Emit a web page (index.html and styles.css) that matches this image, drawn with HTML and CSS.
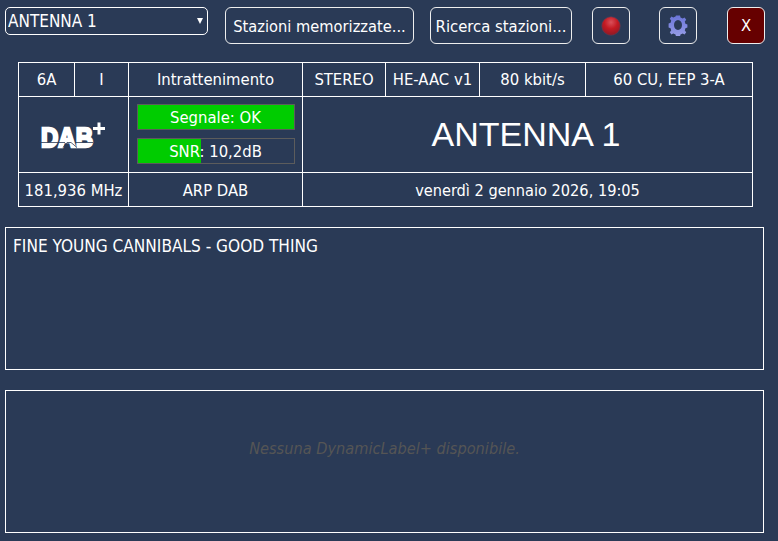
FILE: index.html
```html
<!DOCTYPE html>
<html>
  <head>
    <title>DAB+ Radio</title>
    <link rel="stylesheet" href="styles.css">
  </head>
  <body>
    <div class="toolbar">
      <div class="station-select">
        <select>
          <option>ANTENNA 1</option>
        </select>
      </div>
      <button class="btn btn-stored">Stazioni memorizzate...</button>
      <button class="btn btn-search">Ricerca stazioni...</button>
      <button class="btn btn-icon btn-rec">
        <svg width="20" height="20" viewBox="0 0 20 20">
          <defs>
            <radialGradient id="ball" cx="50%" cy="30%" r="70%">
              <stop offset="0" stop-color="#d9505a"/>
              <stop offset="0.5" stop-color="#c41a22"/>
              <stop offset="1" stop-color="#8c1a26"/>
            </radialGradient>
          </defs>
          <circle cx="10" cy="10" r="9.300" fill="url(#ball)" stroke="#55405a" stroke-width="0.6"/>
        </svg>
      </button>
      <button class="btn btn-icon btn-gear">
        <svg class="gear" width="20" height="22" viewBox="0 0 20 22">
          <defs>
            <linearGradient id="cog" x1="0" y1="0" x2="0" y2="1">
              <stop offset="0" stop-color="#6a74d8"/>
              <stop offset="1" stop-color="#979de6"/>
            </linearGradient>
          </defs>
          <path fill="url(#cog)" fill-rule="evenodd" d="M8 1.500h4l.5 2 2.200 1 1.900-1 1.600 2.300-1.400 1.700.6 2.300 2 .8v2.800l-2 .8-.6 2.300 1.400 1.700-1.600 2.300-1.900-1-2.200 1-.5 2H8l-.5-2-2.200-1-1.900 1-1.600-2.300 1.400-1.700-.6-2.300-2-.8V9.600l2-.8.600-2.300-1.400-1.700 1.600-2.300 1.900 1 2.200-1zM10 6c-2.400 0-4 2.200-4 5s1.600 5 4 5 4-2.200 4-5-1.600-5-4-5z"/>
        </svg>
      </button>
      <button class="btn btn-icon btn-close">X</button>
    </div>

    <table class="info">
      <colgroup>
        <col class="c1"><col class="c2"><col class="c3"><col class="c4"><col class="c5"><col class="c6"><col class="c7">
      </colgroup>
      <tr class="row-top">
        <td>6A</td>
        <td>I</td>
        <td>Intrattenimento</td>
        <td>STEREO</td>
        <td>HE-AAC v1</td>
        <td>80 kbit/s</td>
        <td>60 CU, EEP 3-A</td>
      </tr>
      <tr class="row-mid">
        <td colspan="2">
          <svg class="dab-logo" width="80" height="38" viewBox="-7 -3 80 38">
            <text x="0" y="28" textLength="52" lengthAdjust="spacingAndGlyphs" class="dab-text">DAB</text>
            <rect x="52" y="8" width="12" height="3"/>
            <rect x="56.500" y="3.500" width="3" height="12"/>
            <path class="dab-cut" d="M0 23.500 H24 M22 28.500 L26 23.500 H30 L36 28.500 M34 23.500 H52"/>
          </svg>
        </td>
        <td class="meters">
          <div class="meter">
            <div class="meter-fill" style="width: 100%"></div>
            <span>Segnale: OK</span>
          </div>
          <div class="meter">
            <div class="meter-fill" style="width: 41%"></div>
            <span>SNR: 10,2dB</span>
          </div>
        </td>
        <td colspan="4" class="station-name">ANTENNA 1</td>
      </tr>
      <tr class="row-bottom">
        <td colspan="2">181,936 MHz</td>
        <td>ARP DAB</td>
        <td colspan="4" class="date">venerdì 2 gennaio 2026, 19:05</td>
      </tr>
    </table>

    <div class="panel panel-song">FINE YOUNG CANNIBALS - GOOD THING</div>
    <div class="panel panel-label">Nessuna DynamicLabel+ disponibile.</div>
  </body>
</html>
```

FILE: styles.css
```css
body {
  background-color: #2a3a56;
  color: #fff;
  font-family: "DejaVu Sans", Tahoma, sans-serif;
  font-stretch: condensed;
  font-size: 16.5px;
  margin: 0;
  padding: 7px 0 0 5px;
  height: 534px;
  overflow: hidden;
}

.toolbar {
  display: flex;
  align-items: flex-start;
}

.station-select {
  position: relative;
  width: 203px;
  height: 28px;
}

.station-select::after {
  content: "";
  position: absolute;
  top: 11px;
  right: 5px;
  border-left: 3px solid transparent;
  border-right: 3px solid transparent;
  border-top: 6px solid #fff;
}

.station-select select {
  appearance: none;
  background: none;
  border: 1px solid #fff;
  border-radius: 5px;
  box-sizing: border-box;
  color: #fff;
  font: inherit;
  font-stretch: condensed;
  font-size: 17px;
  width: 100%;
  height: 100%;
  padding: 0 0 0 2px;
}

.btn {
  background: none;
  border: 1px solid #eee;
  border-radius: 6px;
  box-sizing: border-box;
  color: #fff;
  font: inherit;
  font-stretch: condensed;
  height: 37px;
  padding: 0;
}

.btn-stored {
  width: 189px;
  margin-left: 17px;
  padding-top: 2px;
  font-size: 16.300px;
}

.btn-search {
  width: 142px;
  margin-left: 16px;
  padding-top: 2px;
}

.btn-icon {
  display: flex;
  align-items: center;
  justify-content: center;
  width: 38px;
}

.btn-rec {
  margin-left: 20px;
}

.btn-gear {
  margin-left: 29px;
}

.gear {
  margin-bottom: 2px;
}

.btn-close {
  background-color: #660000;
  margin-left: 30px;
}

.info {
  border-collapse: collapse;
  table-layout: fixed;
  width: 734px;
  margin: 18px 0 0 13px;
}

.info td {
  border: 1px solid #fff;
  padding: 0;
  text-align: center;
}

.c1 { width: 56px; }
.c2 { width: 54px; }
.c3 { width: 174px; }
.c4 { width: 83px; }
.c5 { width: 94px; }
.c6 { width: 106px; }
.c7 { width: 167px; }

.row-top td {
  height: 33px;
}

.row-mid td {
  height: 75px;
}

.row-bottom td {
  height: 32px;
  padding-top: 1px;
}

.dab-logo {
  display: block;
  margin: 0 auto;
  fill: #fff;
}

.dab-text {
  font-family: "Liberation Sans", Arial, sans-serif;
  font-size: 28px;
  font-weight: bold;
  font-stretch: normal;
  stroke: #fff;
  stroke-width: 2.400px;
}

.dab-cut {
  fill: none;
  stroke: #2a3a56;
  stroke-width: 0.8;
}

.info td.meters {
  height: 73px;
  padding-bottom: 2px;
}

.meter {
  position: relative;
  box-sizing: border-box;
  border: 1px solid #5c5c5c;
  height: 26px;
  width: 158px;
  margin: 0 auto;
  line-height: 25px;
}

.meter + .meter {
  margin-top: 8px;
}

.meter-fill {
  position: absolute;
  top: 0;
  left: 0;
  height: 100%;
  background-color: #00cc00;
}

.meter span {
  position: relative;
}

.info td.station-name {
  font-family: "Liberation Sans", Arial, sans-serif;
  font-stretch: normal;
  font-size: 34px;
  padding-right: 3px;
}

.info td.date {
  font-size: 16.200px;
}

.panel {
  border: 1px solid #fff;
  box-sizing: border-box;
  width: 759px;
  height: 143px;
}

.panel-song {
  margin-top: 20px;
  padding: 8px 7px;
  font-size: 17.100px;
}

.panel-label {
  display: flex;
  align-items: center;
  justify-content: center;
  margin-top: 20px;
  padding-bottom: 27px;
  color: #555;
  font-size: 16.200px;
  font-style: italic;
}
```
